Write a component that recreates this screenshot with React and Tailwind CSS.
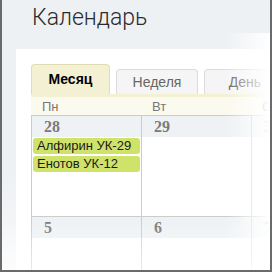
import React from 'react'

const weeks = [
  {
    days: [
      { num: '28', events: ['Алфирин УК-29', 'Енотов УК-12'] },
      { num: '29', events: [] },
      { num: '30', events: [] },
    ],
  },
  {
    days: [
      { num: '5', events: [] },
      { num: '6', events: [] },
      { num: '7', events: [] },
    ],
  },
]

function Tab({ label, active }) {
  if (active) {
    return (
      <div className="w-[79px] h-[30px] shrink-0 flex items-center justify-center rounded-t-[4px] border border-b-0 border-[#e2dcb5] bg-[#f4f0d4] text-[14px] font-bold text-black">
        {label}
      </div>
    )
  }
  return (
    <div className="w-[82px] h-[25px] shrink-0 flex items-center justify-center rounded-t-[4px] border border-b-0 border-[#dcdcdc] bg-[#f5f5f5] text-[14px] text-[#666]">
      {label}
    </div>
  )
}

export default function App() {
  return (
    <div
      className="relative w-[272px] h-[272px] overflow-hidden border-x-2 border-b-2 border-[#6a6a6a] bg-[linear-gradient(to_bottom,#eef1f4_65%,#f8f9fa)]"
      style={{ fontFamily: '"Liberation Sans", Arial, sans-serif' }}
    >
      {/* title */}
      <div
        className="h-[49px] pl-[30px] pt-[3px] text-[23px] leading-[30px] font-light text-[#2b2b2b]"
        style={{ fontFamily: 'Roboto, sans-serif' }}
      >
        Календарь
      </div>

      {/* panel */}
      <div className="ml-[14px] bg-white pl-[15px] pt-[15px] h-[221px]">
        <div className="flex items-end gap-[6px]">
          <Tab label="Месяц" active />
          <Tab label="Неделя" />
          <Tab label="День" />
        </div>
        <div className="h-[3px] bg-[#f4f0d4]" />

        <div className="grid grid-cols-[110px_110px_110px] h-[19px] bg-[#fbfaef] border-b border-[#cccccc] text-[13px] text-[#777]">
          <div className="pl-[11px] leading-[19px]">Пн</div>
          <div className="pl-[11px] leading-[19px]">Вт</div>
          <div className="pl-[11px] leading-[19px]">Ср</div>
        </div>

        {weeks.map((week, wi) => (
          <div
            key={wi}
            className="grid grid-cols-[110px_110px_110px] h-[101px] border-b border-[#cccccc]"
          >
            {week.days.map((day, di) => (
              <div key={di} className="border-l border-[#cccccc] flex flex-col">
                <div
                  className="h-[21px] bg-[#eef2f5] pl-[12px] text-[16px] font-bold leading-[21px] text-[#7a7a7a]"
                  style={{ fontFamily: '"Liberation Serif", serif' }}
                >
                  {day.num}
                </div>
                <div className="flex flex-col gap-[2px] pt-[1px] pl-[1px] pr-[1px]">
                  {day.events.map(ev => (
                    <div
                      key={ev}
                      className="h-[16px] rounded-[3px] bg-[#cfe36a] pl-[4px] text-[13px] leading-[16px] text-[#1a1a1a]"
                    >
                      {ev}
                    </div>
                  ))}
                </div>
              </div>
            ))}
          </div>
        ))}
      </div>

      {/* fade overlays */}
      <div className="absolute right-0 top-[33px] bottom-0 w-[44px] bg-gradient-to-r from-transparent to-white pointer-events-none" />
      <div className="absolute left-0 right-0 bottom-0 h-[50px] bg-gradient-to-b from-transparent to-white/60 pointer-events-none" />
    </div>
  )
}
